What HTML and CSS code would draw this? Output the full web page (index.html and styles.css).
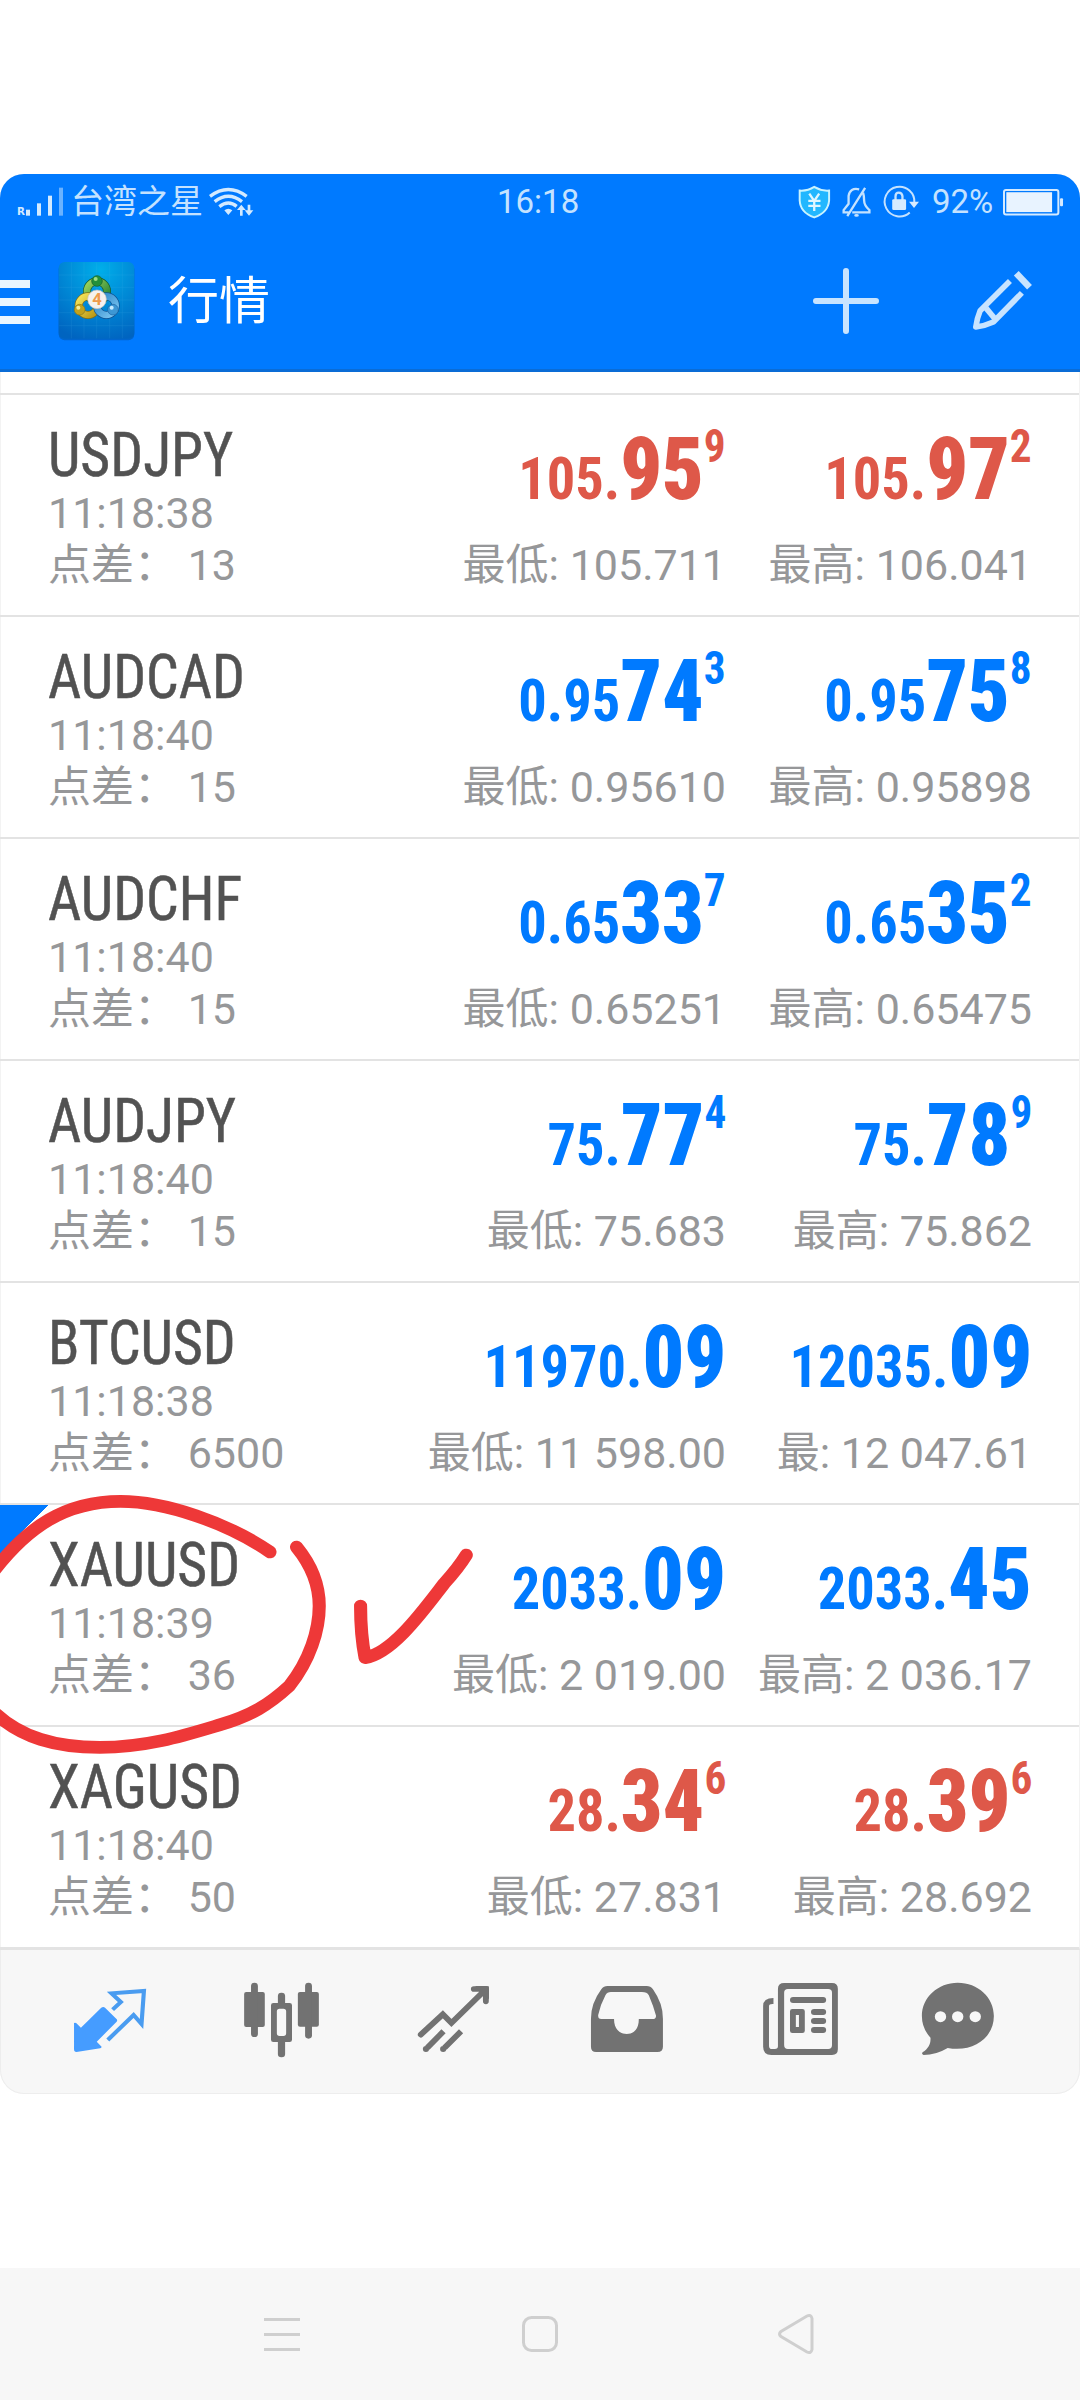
FILE: index.html
```
<!DOCTYPE html>
<html lang="zh-CN">
<head>
<meta charset="utf-8">
<title>行情</title>
<link rel="stylesheet" href="styles.css">
</head>
<body>
<main class="screen">
  <header class="top">
    <div class="status">
      <svg class="signal" viewBox="45 70 150 105"><text class="roam" x="51" y="164">R</text><g fill="#d3eaff"><rect x="78" y="147" width="12" height="18"/><rect x="111" y="128" width="12" height="37"/><rect x="144" y="105" width="12" height="60"/><rect x="177" y="81" width="12" height="84" opacity=".5"/></g></svg>
      <span class="carrier">台湾之星</span>
      <svg class="wifi" viewBox="620 70 150 105"><g fill="none" stroke="#d3eaff" stroke-width="10"><path d="M629 107Q684 66 739 107M643 123Q684 91 725 123M657 138Q684 117 709 137"/></g><path fill="#d3eaff" d="M672 149Q684 140 696 149L684 163zM723 132l13 16h-9v17h-8v-17h-9zM746 165l-13-16h9v-17h8v17h9z"/></svg>
      <span class="clock">16:18</span>
      <svg class="indicators" viewBox="110 65 380 115"><path d="M163 77Q185 90 208 88V118Q205 155 163 169Q121 155 119 118V88Q142 90 163 77z" fill="#22b7ff" stroke="#c9f3ff" stroke-width="6"/><path d="M148 97l15 22 15-22M163 119v31M145 119h37M145 134h37" fill="none" stroke="#dff6ff" stroke-width="7"/><g fill="none" stroke="#c4e2ff" stroke-width="7"><path d="M299 84Q271 78 267 104V128L252 147V154H267M311 95Q314 104 314 118 314 133 330 147V154H278M317 80L263 165"/><path d="M466 125A45 45 0 1 0 452 154" stroke-width="6"/><path d="M409 120V105Q409 94 419 94T430 105V120"/></g><rect x="399" y="114" width="42" height="33" rx="4" fill="#d6ebff"/><path d="M450 122h30l-15 19z" fill="#d6ebff"/><ellipse cx="291" cy="163" rx="7" ry="4" fill="#c4e2ff"/></svg>
      <span class="percent">92%</span>
      <svg class="battery" viewBox="728 75 190 95"><rect x="734" y="86" width="164" height="74" rx="6" fill="none" stroke="#d5eaff" stroke-width="6"/><rect x="741" y="93" width="138" height="60" fill="#e8f3ff"/><rect x="903" y="111" width="9" height="24" rx="3" fill="#d5eaff"/></svg>
    </div>
    <div class="appbar">
      <svg class="menu" viewBox="0 0 30 44"><path fill="#e9f6ff" d="M0 0h30v8H0zM0 18h30v8H0zM0 36h30v8H0z"/></svg>
      <svg class="logo" viewBox="170 300 240 246">
        <defs>
          <radialGradient id="sky" cx=".55" cy=".1" r=".95"><stop offset="0" stop-color="#00aeea"/><stop offset=".5" stop-color="#0089d6"/><stop offset="1" stop-color="#0064c0"/></radialGradient>
          <linearGradient id="gr" x1="0" y1="0" x2="1" y2="1"><stop offset="0" stop-color="#9fd45c"/><stop offset="1" stop-color="#1c7d31"/></linearGradient>
          <linearGradient id="ye" x1="0" y1="0" x2="1" y2="1"><stop offset="0" stop-color="#f4e45a"/><stop offset="1" stop-color="#b99412"/></linearGradient>
          <linearGradient id="bl" x1="0" y1="0" x2="1" y2="1"><stop offset="0" stop-color="#2b86c9"/><stop offset="1" stop-color="#7cc6f1"/></linearGradient>
        </defs>
        <rect x="175" y="310" width="227" height="231" rx="18" fill="#0057ae" opacity=".6"/>
        <rect x="175" y="306" width="227" height="230" rx="18" fill="url(#sky)"/>
        <path d="M251 307V535M289 307V535M328 307V535M366 307V535M213 307V535M176 382H401M176 420H401M176 458H401M176 497H401M176 345H401" stroke="#5fc0f0" stroke-width="1.5" opacity=".22"/>
        <g fill="none" stroke-width="20"><circle cx="290" cy="394" r="30" stroke="#155b2c" stroke-width="24"/><circle cx="290" cy="394" r="30" stroke="url(#gr)"/><circle cx="263" cy="437" r="28" stroke="#806d18" stroke-width="24"/><circle cx="263" cy="437" r="28" stroke="url(#ye)"/><circle cx="318" cy="437" r="28" stroke="#0d4f90" stroke-width="24"/><circle cx="318" cy="437" r="28" stroke="url(#bl)"/></g>
        <circle cx="290" cy="363" r="16" fill="#23903a" stroke="#185f28" stroke-width="2"/><circle cx="286" cy="357" r="6" fill="#9ddc82"/>
        <circle cx="238" cy="449" r="16" fill="#c2a21c" stroke="#8d7715" stroke-width="2"/><circle cx="234" cy="443" r="6" fill="#f6ec9a"/>
        <circle cx="338" cy="449" r="16" fill="#3d97d4" stroke="#1b62a3" stroke-width="2"/><circle cx="334" cy="443" r="6" fill="#c8ebff"/>
        <circle cx="290" cy="418" r="28" fill="#f5f1ee" stroke="#c9c3be" stroke-width="2"/>
        <text class="four" x="290" y="436">4</text>
      </svg>
      <h1>行情</h1>
      <svg class="add" viewBox="0 0 66 66"><path d="M33 3V63M3 33H63" stroke="#c8e4ff" stroke-width="6" stroke-linecap="round"/></svg>
      <svg class="edit" viewBox="636 324 186 190"><g fill="none" stroke="#c8e4ff" stroke-width="17" stroke-linejoin="round"><path d="M750 360L660 450Q650 474 647 499Q674 496 700 484L786 396"/><path d="M678 442L707 477"/><path d="M769 337L809 379" stroke-width="20"/></g></svg>
    </div>
  </header>

  <section class="quotes">
    <article class="row">
      <div class="pair"><b class="sym">USDJPY</b><span>11:18:38</span><span>点差： 13</span></div>
      <div class="price down"><p><i>105.</i><b>95</b><sup>9</sup></p><small>最低: 105.711</small></div>
      <div class="price down"><p><i>105.</i><b>97</b><sup>2</sup></p><small>最高: 106.041</small></div>
    </article>
    <article class="row">
      <div class="pair"><b class="sym">AUDCAD</b><span>11:18:40</span><span>点差： 15</span></div>
      <div class="price"><p><i>0.95</i><b>74</b><sup>3</sup></p><small>最低: 0.95610</small></div>
      <div class="price"><p><i>0.95</i><b>75</b><sup>8</sup></p><small>最高: 0.95898</small></div>
    </article>
    <article class="row">
      <div class="pair"><b class="sym">AUDCHF</b><span>11:18:40</span><span>点差： 15</span></div>
      <div class="price"><p><i>0.65</i><b>33</b><sup>7</sup></p><small>最低: 0.65251</small></div>
      <div class="price"><p><i>0.65</i><b>35</b><sup>2</sup></p><small>最高: 0.65475</small></div>
    </article>
    <article class="row">
      <div class="pair"><b class="sym">AUDJPY</b><span>11:18:40</span><span>点差： 15</span></div>
      <div class="price"><p><i>75.</i><b>77</b><sup>4</sup></p><small>最低: 75.683</small></div>
      <div class="price"><p><i>75.</i><b>78</b><sup>9</sup></p><small>最高: 75.862</small></div>
    </article>
    <article class="row">
      <div class="pair"><b class="sym">BTCUSD</b><span>11:18:38</span><span>点差： 6500</span></div>
      <div class="price"><p><i>11970.</i><b>09</b></p><small>最低: 11 598.00</small></div>
      <div class="price"><p><i>12035.</i><b>09</b></p><small>最: 12 047.61</small></div>
    </article>
    <article class="row picked">
      <div class="pair"><b class="sym">XAUUSD</b><span>11:18:39</span><span>点差： 36</span></div>
      <div class="price"><p><i>2033.</i><b>09</b></p><small>最低: 2 019.00</small></div>
      <div class="price"><p><i>2033.</i><b>45</b></p><small>最高: 2 036.17</small></div>
    </article>
    <article class="row">
      <div class="pair"><b class="sym">XAGUSD</b><span>11:18:40</span><span>点差： 50</span></div>
      <div class="price down"><p><i>28.</i><b>34</b><sup>6</sup></p><small>最低: 27.831</small></div>
      <div class="price down"><p><i>28.</i><b>39</b><sup>6</sup></p><small>最高: 28.692</small></div>
    </article>
  </section>

  <nav class="tabs">
    <svg viewBox="69.7 60 499.5 429" preserveAspectRatio="none"><g fill="none" stroke="#4a9cf0" stroke-width="12" stroke-linejoin="miter"><path d="M327 239L351 216 324 190 418 183 411 282 388 255 313 330"/></g><path fill="#459cff" d="M215 279Q219 277 222 280L235 293 294 233Q300 229 305 233L339 268Q342 272 338 276L281 335 295 350Q295 354 291 355L222 366Q215 366 215 358z"/></svg>
    <svg viewBox="569.2 60 499.5 429" preserveAspectRatio="none"><g fill="#727272"><rect x="709" y="186" width="60" height="105" rx="6"/><rect x="729" y="158" width="20" height="163" rx="10"/><rect x="865" y="186" width="61" height="104" rx="6"/><rect x="886" y="158" width="20" height="168" rx="10"/><rect x="807" y="188" width="21" height="40" rx="10"/><rect x="807" y="325" width="21" height="57" rx="10"/><path fill-rule="evenodd" d="M794 219h47q7 0 7 7v103q0 7-7 7h-47q-7 0-7-7v-103q0-7 7-7zM812 236q-8 0-8 8v66q0 8 8 8h11q8 0 8-8v-66q0-8-8-8z"/></g></svg>
    <svg viewBox="1068.7 60 499.5 429" preserveAspectRatio="none"><g fill="none" stroke="#727272" stroke-width="17"><path stroke-linecap="round" d="M1222 314L1286 253 1311 279 1408 181M1376 177H1411V214"/><path d="M1288 304L1241 353M1339 304L1291 353"/></g><path fill="#727272" d="M1380 168h32q8 0 8 8v32l-14-12-13-10z"/><circle cx="1237" cy="357" r="9" fill="#727272"/><circle cx="1287" cy="357" r="9" fill="#727272"/></svg>
    <svg viewBox="0 60 502.4 429" preserveAspectRatio="none"><path fill="#727272" fill-rule="evenodd" d="M196 168H310Q321 168 328 178Q357 220 357 266V350Q357 366 341 366H163Q148 366 148 350V266Q148 220 178 178Q185 168 196 168zM206 186Q195 186 190 196Q175 225 169 255Q168 267 178 267H215C215 296 230 312 252 312S287 296 287 267H327Q337 267 337 257Q330 230 316 196Q311 186 296 186z"/></svg>
    <svg viewBox="502.4 60 502.4 429" preserveAspectRatio="none"><g fill="#727272"><path fill-rule="evenodd" d="M709 159H848Q865 159 865 176V358Q865 375 848 375H672Q648 375 648 350V228Q648 204 678 204V222Q665 221 665 228V347Q665 357 674 357H682Q691 357 691 349V176Q691 159 709 159zM720 177Q709 177 709 188V345Q709 357 720 357H837Q848 357 848 345V188Q848 177 837 177z"/><rect x="726" y="201" width="105" height="18" rx="9"/><path fill-rule="evenodd" d="M733 237h29q7 0 7 7v58q0 7-7 7h-29q-7 0-7-7v-58q0-7 7-7zM743 255v36h9v-36z"/><rect x="787" y="237" width="44" height="18" rx="9"/><rect x="787" y="264" width="44" height="18" rx="9"/><rect x="787" y="291" width="44" height="18" rx="9"/></g></svg>
    <svg viewBox="1004.8 60 464.6 429" preserveAspectRatio="none"><path fill="#727272" d="M1213 158C1272 158 1318 202 1318 258C1318 323 1259 368 1184 354Q1150 375 1114 375Q1107 373 1111 367C1129 354 1135 341 1134 323Q1109 295 1109 258C1109 202 1156 158 1213 158z"/><g fill="#f7f7f7"><circle cx="1163" cy="260" r="16.500"/><circle cx="1213" cy="260" r="16.500"/><circle cx="1264" cy="260" r="16.500"/></g></svg>
  </nav>
  <svg class="ink" viewBox="0 0 1568 1440" preserveAspectRatio="none"><g fill="none" stroke="#ee3838" stroke-width="38" stroke-linecap="round" stroke-linejoin="round"><path d="M784 216C660 128 480 64 350 64C190 64 80 140 -22 278M-22 692C60 775 165 802 290 802C430 802 540 765 640 734C730 706 780 675 840 618C900 540 927 450 927 378C927 310 900 250 861 201M1047 378C1047 450 1052 490 1060 533C1140 520 1230 390 1290 310Q1330 265 1354 225"/></g></svg>
</main>
<footer class="sysnav">
  <svg viewBox="0 0 44 44"><path d="M4 7.500H40M4 22.500H40M4 37.500H40"/></svg>
  <svg viewBox="0 0 44 44"><rect x="5.500" y="5.500" width="33" height="33" rx="8"/></svg>
  <svg viewBox="2 0 44 44"><path d="M38 6.500V37.500Q37 42 33 40L7 24.500Q4 22 7 19.500L33 4Q37 2 38 6.500z"/></svg>
</footer>
</body>
</html>
```
FILE: styles.css
```
* { box-sizing: border-box; }
body {
  margin: 0;
  padding-top: 174px;
  height: 2400px;
  display: flex;
  flex-direction: column;
  justify-content: space-between;
  background: #fff;
  font-family: Roboto, "Noto Sans CJK SC", sans-serif;
}
svg { display: block; flex: none; }

.screen {
  position: relative;
  height: 1920px;
  border-radius: 24px;
  overflow: hidden;
  background: #f7f7f7;
  box-shadow: inset 0 0 0 1px #ededed;
}
.top {
  height: 198px;
  background: #007aff;
  border-bottom: 3px solid #0a6cd6;
}
.status {
  height: 56px;
  display: flex;
  align-items: center;
  color: #c4e2ff;
  font-size: 33px;
  line-height: 56px;
}
.signal { width: 50px; height: 35px; margin: -1px 0 0 15px; }
.roam { font: bold 31px "DejaVu Sans"; fill: #d3eaff; }
.carrier { width: 136px; margin-left: 6px; font-size: 33px; line-height: 58px; white-space: nowrap; }
.wifi { width: 50px; height: 35px; margin-top: -1px; }
.clock { width: 90px; margin-left: 240px; }
.indicators { width: 127px; height: 38px; margin: -1px 0 0 209px; }
.percent { width: 70px; margin-left: 9px; }
.battery { width: 63px; height: 32px; }

.appbar { height: 139px; display: flex; align-items: center; padding-bottom: 2px; }
.menu { width: 30px; height: 44px; margin-top: 6px; }
.logo { width: 80px; height: 82px; margin: 4px 0 0 27px; }
.four { font: bold 50px Roboto; fill: #ef9a4c; text-anchor: middle; }
h1 { margin: 6px auto 0 31px; color: #fff; font-size: 51px; font-weight: 400; line-height: 80px; }
.add { width: 66px; height: 66px; margin-top: 4px; }
.edit { width: 62px; height: 63px; margin: 3px 46px 0 93px; }

.quotes { height: 1578px; padding-top: 21px; background: #fff; border-bottom: 3px solid #e3e3e3; border-right: 1px solid #f3f3f3; box-shadow: inset 1px 0 #f3f3f3; }
.row {
  position: relative;
  height: 222px;
  display: grid;
  grid-template-columns: 372px 306px 306px;
  padding-left: 48px;
  border-top: 2px solid #e3e3e3;
  color: #969799;
  font-size: 43px;
}
.picked { background: linear-gradient(135deg, #007aff 34px, #fff 34px); }
.pair { display: flex; flex-direction: column; padding-top: 33px; line-height: 52px; white-space: pre; }
.sym {
  height: 59px;
  line-height: 54px;
  color: #525252;
  font-family: Roboto, "Roboto Condensed";
  font-size: 61px;
  font-weight: 400;
  font-stretch: 75%;
  -webkit-text-stroke: .5px #525252;
  transform: scaleX(.945);
  transform-origin: left;
}
.price { display: flex; flex-direction: column; align-items: flex-end; color: #007aff; white-space: nowrap; }
.price p {
  margin: 0;
  height: 136px;
  padding-top: 34px;
  display: flex;
  align-items: baseline;
  font-weight: 700;
  font-stretch: 75%;
  line-height: 80px;
  transform: scaleX(.94);
  transform-origin: right;
}
.price i { font-size: 60px; font-style: normal; }
.price b { font-size: 87px; }
.price sup { position: relative; top: -37px; font-size: 46px; line-height: 40px; }
.price small { font-size: 43px; line-height: 68px; color: #969799; }
.price.down p { color: #de5849; }

.tabs {
  height: 144px;
  display: grid;
  grid-template-columns: 172px 172px 172px 173px 173px 160px;
  padding-left: 24px;
}
.tabs svg { width: 100%; height: 143px; }
.ink { position: absolute; left: 0; top: 1306px; width: 540px; height: 480px; }

.sysnav {
  height: 132px;
  display: flex;
  justify-content: space-between;
  align-items: center;
  padding: 0 260px;
  background: #f7f7f7;
}
.sysnav svg { width: 44px; height: 44px; fill: none; stroke: #cfcfcf; stroke-width: 3; }
```
